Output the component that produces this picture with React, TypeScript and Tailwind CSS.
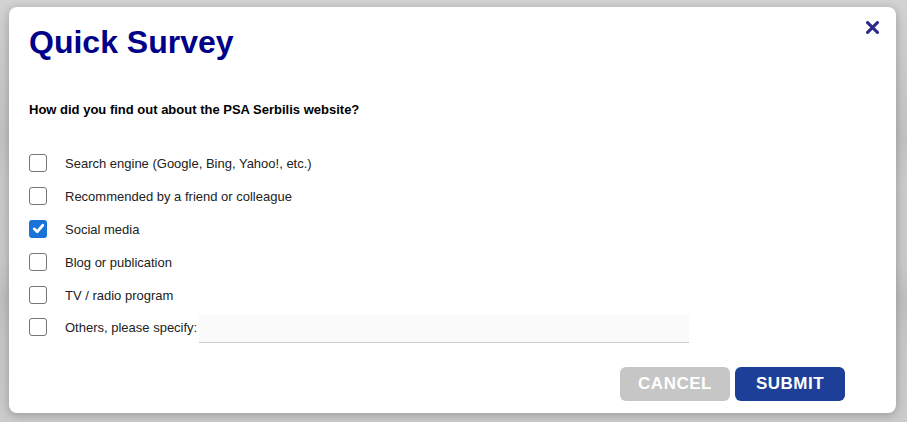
import React, { useState } from 'react';

const options = [
    'Search engine (Google, Bing, Yahoo!, etc.)',
    'Recommended by a friend or colleague',
    'Social media',
    'Blog or publication',
    'TV / radio program',
];

const Box: React.FC<{ checked: boolean; onClick: () => void }> = ({ checked, onClick }) => (
    <span
        onClick={onClick}
        className={`flex h-[18px] w-[18px] shrink-0 cursor-pointer items-center justify-center rounded-[3px] ${
            checked ? 'bg-[#1a73d8]' : 'border border-[#767676] bg-white'
        }`}
    >
        {checked && (
            <svg width="13" height="13" viewBox="0 0 12 12">
                <path d="M2 6.3 L4.8 9 L10 3" fill="none" stroke="white" strokeWidth="2.5" strokeLinecap="round" strokeLinejoin="round" />
            </svg>
        )}
    </span>
);

const App: React.FC = () => {
    const [checked, setChecked] = useState<boolean[]>([false, false, true, false, false, false]);
    const toggle = (i: number) => setChecked(prev => prev.map((c, j) => (j === i ? !c : c)));

    return (
        <div className="h-[422px] w-full overflow-hidden bg-[linear-gradient(180deg,#d2d2d2_0px,#cdcdcd_40px,#c6c6c6_100px,#c2c2c2_140px,#cacaca_180px,#c9c9c9_260px,#bfbfbf_300px,#c6c6c6_340px,#cbcbcb_422px)] pt-[7px] pl-[9px] font-['Liberation_Sans',Arial,sans-serif]">
            <div className="relative flex h-[406px] w-[887px] flex-col rounded-[8px] bg-white pt-[17px] pl-[20px] shadow-[0_2px_10px_rgba(0,0,0,0.25)]">
                {/* close */}
                <button className="absolute right-[17px] top-[13px] flex h-[14px] w-[14px] items-center justify-center">
                    <svg width="13" height="13" viewBox="0 0 12 12">
                        <path d="M1.5 1.5 L10.5 10.5 M10.5 1.5 L1.5 10.5" stroke="#2b2b8c" strokeWidth="2.8" strokeLinecap="square" />
                    </svg>
                </button>

                <h2 className="text-[32px] font-bold leading-[37px] text-[#000088]">Quick Survey</h2>

                <p className="mt-[41px] text-[13px] font-bold leading-[15px] text-black">
                    How did you find out about the PSA Serbilis website?
                </p>

                <div className="mt-[30px] flex flex-col">
                    {options.map((label, i) => (
                        <div key={i} className="flex h-[32.8px] items-center">
                            <Box checked={checked[i]} onClick={() => toggle(i)} />
                            <span className="ml-[18px] mt-[1px] text-[13px] leading-[15px] text-[#222]">{label}</span>
                        </div>
                    ))}
                    <div className="flex h-[32.8px] items-center">
                        <Box checked={checked[5]} onClick={() => toggle(5)} />
                        <span className="ml-[18px] mt-[1px] text-[13px] leading-[15px] text-[#222]">Others, please specify:</span>
                        <input
                            type="text"
                            className="ml-[2px] mt-[4px] h-[28px] w-[490px] border-b border-[#cccccc] bg-[#fafafa] px-2 text-[13px] outline-none"
                        />
                    </div>
                </div>

                <div className="mt-[23px] flex justify-end gap-[5px] pr-[51px]">
                    <button className="h-[34px] w-[110px] rounded-[6px] bg-[#c6c6c6] text-[17px] font-bold tracking-[0.5px] text-white">
                        CANCEL
                    </button>
                    <button className="h-[34px] w-[110px] rounded-[6px] bg-[#1e3f98] text-[17px] font-bold tracking-[0.5px] text-white">
                        SUBMIT
                    </button>
                </div>
            </div>
        </div>
    );
};

export default App;
